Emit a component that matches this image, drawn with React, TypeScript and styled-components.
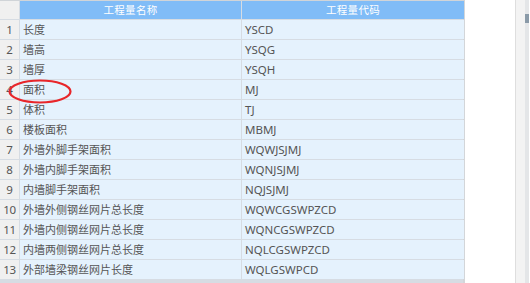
import React from "react";
import styled, { createGlobalStyle } from "styled-components";

const Global = createGlobalStyle`
  html, body { margin: 0; padding: 0; background: #ffffff; }
  body { width: 530px; height: 283px; overflow: hidden; }
`;

const rows: [string, string][] = [
  ["长度", "YSCD"],
  ["墙高", "YSQG"],
  ["墙厚", "YSQH"],
  ["面积", "MJ"],
  ["体积", "TJ"],
  ["楼板面积", "MBMJ"],
  ["外墙外脚手架面积", "WQWJSJMJ"],
  ["外墙内脚手架面积", "WQNJSJMJ"],
  ["内墙脚手架面积", "NQJSJMJ"],
  ["外墙外侧钢丝网片总长度", "WQWCGSWPZCD"],
  ["外墙内侧钢丝网片总长度", "WQNCGSWPZCD"],
  ["内墙两侧钢丝网片总长度", "NQLCGSWPZCD"],
  ["外部墙梁钢丝网片长度", "WQLGSWPCD"],
];

const Page = styled.div`
  display: flex;
  height: 283px;
  font-family: "Noto Sans CJK SC", "Noto Sans", sans-serif;
`;

const Grid = styled.div`
  position: relative;
  display: grid;
  grid-template-columns: 19px 221px 222px;
  grid-template-rows: 18px;
  grid-auto-rows: 19px;
  column-gap: 1px;
  row-gap: 1px;
  background: #d6dce3;
  border-top: 1px solid #d0d4d8;
  border-right: 2px solid #d3d6d9;
  width: 465px;
  box-sizing: border-box;
  align-content: start;
`;

const Corner = styled.div`
  background: #f0f0f0;
`;

const HeadCell = styled.div`
  background: #80bcf7;
  color: #ffffff;
  font-size: 10.5px;
  line-height: 18px;
  text-align: center;
  letter-spacing: 0.3px;
`;

const NumCell = styled.div`
  background: #f0f0f0;
  color: #555;
  font-family: "Noto Sans", "Noto Sans CJK SC", sans-serif;
  font-size: 11.5px;
  line-height: 19px;
  text-align: center;
  letter-spacing: -0.3px;
`;

const Cell = styled.div<{ $latin?: boolean }>`
  background: #e5f2fd;
  color: #555555;
  font-size: ${(p) => (p.$latin ? "11.5px" : "11px")};
  line-height: 19px;
  padding-left: 3px;
  white-space: nowrap;
  overflow: hidden;
  font-family: ${(p) =>
    p.$latin
      ? `"Noto Sans", "Noto Sans CJK SC", sans-serif`
      : `"Noto Sans CJK SC", "Noto Sans", sans-serif`};
`;

const Blank = styled.div`
  width: 50px;
  background: #ffffff;
`;

const Divider = styled.div`
  width: 1px;
  background: #dedede;
`;

const Track = styled.div`
  width: 9px;
  background: #f3f3f3;
`;

const EdgeBar = styled.div`
  position: relative;
  width: 4px;
  background: #e4e6e8;
`;

const EdgeKnob = styled.div`
  position: absolute;
  top: 14px;
  left: 0;
  width: 4px;
  height: 9px;
  background: #8a9aa8;
`;

const Ring = styled.svg`
  position: absolute;
  left: 7px;
  top: 77px;
  pointer-events: none;
`;

export default function App() {
  return (
    <>
      <Global />
      <Page>
        <Grid>
          <Corner />
          <HeadCell>工程量名称</HeadCell>
          <HeadCell>工程量代码</HeadCell>
          {rows.map(([name, code], i) => (
            <React.Fragment key={code}>
              <NumCell>{i + 1}</NumCell>
              <Cell>{name}</Cell>
              <Cell $latin>{code}</Cell>
            </React.Fragment>
          ))}
          <Ring width="66" height="27" viewBox="0 0 66 27">
            <ellipse
              cx="33"
              cy="13.5"
              rx="30.5"
              ry="11"
              fill="none"
              stroke="#e8262a"
              strokeWidth="2.2"
            />
          </Ring>
        </Grid>
        <Blank />
        <Divider />
        <Track />
        <EdgeBar>
          <EdgeKnob />
        </EdgeBar>
      </Page>
    </>
  );
}
